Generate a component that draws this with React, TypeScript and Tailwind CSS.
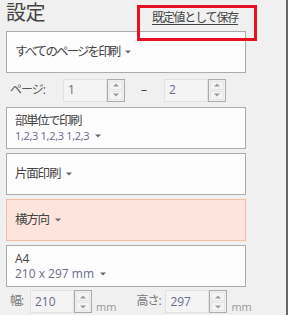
import type { ReactNode } from "react";

const FONT = "font-['Open_Sans','Noto_Sans_CJK_JP',sans-serif]";

function Caret() {
  return (
    <svg className="ml-[6px] inline-block shrink-0" width="6" height="4" viewBox="0 0 6 4">
      <path d="M0 0.5h6L3 3.5z" fill="#666" />
    </svg>
  );
}

function Card({ children, warm = false }: { children: ReactNode; warm?: boolean }) {
  return (
    <div
      className={`flex h-[42px] w-[240px] shrink-0 flex-col justify-center border px-[8px] ${
        warm ? "border-[#f6bca6] bg-[#fde4dc]" : "border-[#ababab] bg-[#fdfdfd]"
      }`}
    >
      {children}
    </div>
  );
}

function Spin({ value }: { value: string }) {
  return (
    <div className="flex h-[23px] w-[62px] shrink-0">
      <div className="flex flex-1 items-center border border-[#e2e2e2] bg-[#f4f4f4] pl-[4px] text-[12px] text-[#6a6a8a]">
        {value}
      </div>
      <div className="flex w-[18px] flex-col gap-[1px] border border-[#ababab] bg-[#f0f0f0] p-[1px]">
        <div className="flex flex-1 items-center justify-center border border-[#e6e6e6] bg-[#f4f4f4]">
          <svg width="6" height="4" viewBox="0 0 6 4">
            <path d="M0 3.5h6L3 0.5z" fill="#999" />
          </svg>
        </div>
        <div className="flex flex-1 items-center justify-center border border-[#e6e6e6] bg-[#f4f4f4]">
          <svg width="6" height="4" viewBox="0 0 6 4">
            <path d="M0 0.5h6L3 3.5z" fill="#999" />
          </svg>
        </div>
      </div>
    </div>
  );
}

export default function App() {
  return (
    <div className={`flex h-[315px] w-[307px] overflow-hidden bg-[#f0f0f0] text-[#444] ${FONT}`}>
      <div className="relative w-[286px] shrink-0 pl-[6px]">
        <div className="flex h-[31px] w-[240px] items-start justify-between">
          <h2 className="mt-[1px] text-[20px] leading-[24px] tracking-[-0.5px] text-[#444]">設定</h2>
          <a className="mr-[8px] mt-[11px] whitespace-nowrap text-[12px] leading-[14px] tracking-[-1.2px] text-[#444] underline underline-offset-2">
            既定値として保存
          </a>
        </div>
        <div className="absolute left-[137px] top-[5px] z-10 h-[36px] w-[120px] border-[3px] border-[#e81123]" />

        <Card>
          <p className="flex items-center whitespace-nowrap text-[12.5px] tracking-[-1.9px]">
            すべてのページを印刷
            <Caret />
          </p>
        </Card>

        <div className="flex h-[34px] items-center whitespace-nowrap pl-[4px] text-[12px] text-[#555]">
          <span className="w-[53px] tracking-[-1px]">ページ:</span>
          <Spin value="1" />
          <span className="ml-[16px] w-[23px] text-[#444]">–</span>
          <Spin value="2" />
        </div>

        <div className="flex flex-col gap-[4px]">
          <Card>
            <p className="whitespace-nowrap text-[12.5px] leading-[15px] tracking-[-1.5px]">部単位で印刷</p>
            <p className="flex items-center whitespace-nowrap text-[11px] leading-[15px] tracking-[-0.3px] text-[#6a6a8a]">
              1,2,3 1,2,3 1,2,3
              <Caret />
            </p>
          </Card>
          <Card>
            <p className="flex items-center whitespace-nowrap text-[12.5px] tracking-[-1.2px]">
              片面印刷
              <Caret />
            </p>
          </Card>
          <Card warm>
            <p className="flex items-center whitespace-nowrap text-[12.5px] tracking-[-1.2px]">
              横方向
              <Caret />
            </p>
          </Card>
          <Card>
            <div className="flex flex-col gap-[1px]">
              <p className="text-[12px] leading-[14px]">A4</p>
              <p className="flex items-center whitespace-nowrap text-[12px] leading-[14px] text-[#6a6a8a]">
                210 x 297 mm
                <Caret />
              </p>
            </div>
          </Card>
        </div>

        <div className="mt-[3px] flex items-end whitespace-nowrap text-[12px] text-[#777]">
          <span className="mb-[3px] w-[24px] shrink-0 pl-[4px] tracking-[-1px]">幅:</span>
          <Spin value="210" />
          <span className="ml-[4px] shrink-0 text-[11px] leading-[13px] text-[#999]">mm</span>
          <span className="mb-[3px] ml-[20px] w-[29px] shrink-0 tracking-[-1px]">高さ:</span>
          <Spin value="297" />
          <span className="ml-[4px] shrink-0 text-[11px] leading-[13px] text-[#999]">mm</span>
        </div>
      </div>
      <div className="w-[2px] shrink-0 bg-[#666]" />
      <div className="flex-1 bg-white" />
    </div>
  );
}
